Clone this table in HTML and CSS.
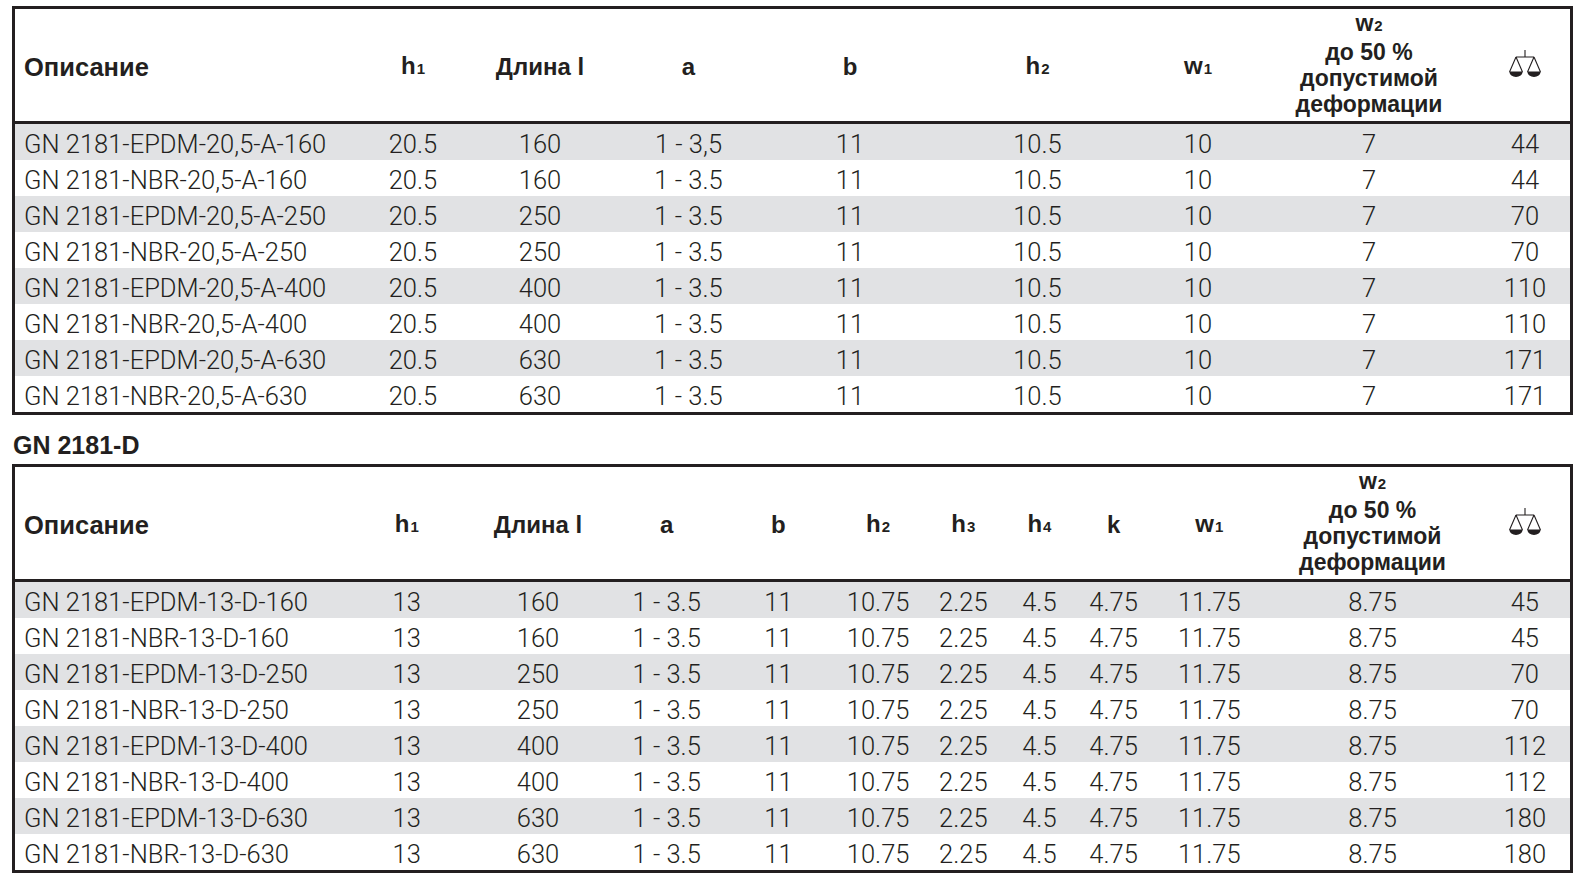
FILE: index.html
```html
<!DOCTYPE html>
<html lang="ru">
<head>
<meta charset="utf-8">
<title>GN 2181</title>
<link rel="stylesheet" href="styles.css">
</head>
<body>
<div class="page">
  <table class="spec">
    <colgroup>
      <col class="c-desc1"><col class="c-h1a"><col class="c-lena"><col class="c-aa"><col class="c-ba"><col class="c-h2a"><col class="c-w1a"><col class="c-w2a"><col class="c-wt">
    </colgroup>
    <thead>
      <tr>
        <th class="desc">Описание</th>
        <th>h<span class="sub">1</span></th>
        <th>Длина l</th>
        <th>a</th>
        <th>b</th>
        <th>h<span class="sub">2</span></th>
        <th>w<span class="sub">1</span></th>
        <th class="multi">w<span class="sub">2</span><br>до 50 %<br>допустимой<br>деформации</th>
        <th class="icon"><svg class="scale" viewBox="0 0 34 28" width="34" height="28" aria-label="вес"><path d="M17 0V7M8 7H26M8 7L1.5 22M8 7L14.5 22M1.5 22H14.5M26 7L19.5 22M26 7L32.5 22M19.5 22H32.5" fill="none" stroke="#231f20" stroke-width="1.1"/><path d="M1.5 22A6.5 5 0 0 0 14.5 22Z M19.5 22A6.5 5 0 0 0 32.5 22Z" fill="#231f20"/></svg></th>
      </tr>
    </thead>
    <tbody>
      <tr class="alt"><td class="desc">GN 2181-EPDM-20,5-A-160</td><td>20.5</td><td>160</td><td>1 - 3,5</td><td>11</td><td>10.5</td><td>10</td><td>7</td><td>44</td></tr>
      <tr><td class="desc">GN 2181-NBR-20,5-A-160</td><td>20.5</td><td>160</td><td>1 - 3.5</td><td>11</td><td>10.5</td><td>10</td><td>7</td><td>44</td></tr>
      <tr class="alt"><td class="desc">GN 2181-EPDM-20,5-A-250</td><td>20.5</td><td>250</td><td>1 - 3.5</td><td>11</td><td>10.5</td><td>10</td><td>7</td><td>70</td></tr>
      <tr><td class="desc">GN 2181-NBR-20,5-A-250</td><td>20.5</td><td>250</td><td>1 - 3.5</td><td>11</td><td>10.5</td><td>10</td><td>7</td><td>70</td></tr>
      <tr class="alt"><td class="desc">GN 2181-EPDM-20,5-A-400</td><td>20.5</td><td>400</td><td>1 - 3.5</td><td>11</td><td>10.5</td><td>10</td><td>7</td><td>110</td></tr>
      <tr><td class="desc">GN 2181-NBR-20,5-A-400</td><td>20.5</td><td>400</td><td>1 - 3.5</td><td>11</td><td>10.5</td><td>10</td><td>7</td><td>110</td></tr>
      <tr class="alt"><td class="desc">GN 2181-EPDM-20,5-A-630</td><td>20.5</td><td>630</td><td>1 - 3.5</td><td>11</td><td>10.5</td><td>10</td><td>7</td><td>171</td></tr>
      <tr><td class="desc">GN 2181-NBR-20,5-A-630</td><td>20.5</td><td>630</td><td>1 - 3.5</td><td>11</td><td>10.5</td><td>10</td><td>7</td><td>171</td></tr>
    </tbody>
  </table>

  <div class="label">GN 2181-D</div>

  <table class="spec">
    <colgroup>
      <col class="c-desc2"><col class="c-h1b"><col class="c-lenb"><col class="c-ab"><col class="c-bb"><col class="c-h2b"><col class="c-h3b"><col class="c-h4b"><col class="c-kb"><col class="c-w1b"><col class="c-w2b"><col class="c-wt">
    </colgroup>
    <thead>
      <tr>
        <th class="desc">Описание</th>
        <th>h<span class="sub">1</span></th>
        <th>Длина l</th>
        <th>a</th>
        <th>b</th>
        <th>h<span class="sub">2</span></th>
        <th>h<span class="sub">3</span></th>
        <th>h<span class="sub">4</span></th>
        <th>k</th>
        <th>w<span class="sub">1</span></th>
        <th class="multi">w<span class="sub">2</span><br>до 50 %<br>допустимой<br>деформации</th>
        <th class="icon"><svg class="scale" viewBox="0 0 34 28" width="34" height="28" aria-label="вес"><path d="M17 0V7M8 7H26M8 7L1.5 22M8 7L14.5 22M1.5 22H14.5M26 7L19.5 22M26 7L32.5 22M19.5 22H32.5" fill="none" stroke="#231f20" stroke-width="1.1"/><path d="M1.5 22A6.5 5 0 0 0 14.5 22Z M19.5 22A6.5 5 0 0 0 32.5 22Z" fill="#231f20"/></svg></th>
      </tr>
    </thead>
    <tbody>
      <tr class="alt"><td class="desc">GN 2181-EPDM-13-D-160</td><td>13</td><td>160</td><td>1 - 3.5</td><td>11</td><td>10.75</td><td>2.25</td><td>4.5</td><td>4.75</td><td>11.75</td><td>8.75</td><td>45</td></tr>
      <tr><td class="desc">GN 2181-NBR-13-D-160</td><td>13</td><td>160</td><td>1 - 3.5</td><td>11</td><td>10.75</td><td>2.25</td><td>4.5</td><td>4.75</td><td>11.75</td><td>8.75</td><td>45</td></tr>
      <tr class="alt"><td class="desc">GN 2181-EPDM-13-D-250</td><td>13</td><td>250</td><td>1 - 3.5</td><td>11</td><td>10.75</td><td>2.25</td><td>4.5</td><td>4.75</td><td>11.75</td><td>8.75</td><td>70</td></tr>
      <tr><td class="desc">GN 2181-NBR-13-D-250</td><td>13</td><td>250</td><td>1 - 3.5</td><td>11</td><td>10.75</td><td>2.25</td><td>4.5</td><td>4.75</td><td>11.75</td><td>8.75</td><td>70</td></tr>
      <tr class="alt"><td class="desc">GN 2181-EPDM-13-D-400</td><td>13</td><td>400</td><td>1 - 3.5</td><td>11</td><td>10.75</td><td>2.25</td><td>4.5</td><td>4.75</td><td>11.75</td><td>8.75</td><td>112</td></tr>
      <tr><td class="desc">GN 2181-NBR-13-D-400</td><td>13</td><td>400</td><td>1 - 3.5</td><td>11</td><td>10.75</td><td>2.25</td><td>4.5</td><td>4.75</td><td>11.75</td><td>8.75</td><td>112</td></tr>
      <tr class="alt"><td class="desc">GN 2181-EPDM-13-D-630</td><td>13</td><td>630</td><td>1 - 3.5</td><td>11</td><td>10.75</td><td>2.25</td><td>4.5</td><td>4.75</td><td>11.75</td><td>8.75</td><td>180</td></tr>
      <tr><td class="desc">GN 2181-NBR-13-D-630</td><td>13</td><td>630</td><td>1 - 3.5</td><td>11</td><td>10.75</td><td>2.25</td><td>4.5</td><td>4.75</td><td>11.75</td><td>8.75</td><td>180</td></tr>
    </tbody>
  </table>
</div>
</body>
</html>
```

FILE: styles.css
```css
html, body {
  margin: 0;
  padding: 0;
  background: #ffffff;
}

.page {
  padding: 6px 13px 0 12px;
  color: #231f20;
}

.spec {
  width: 1561px;
  table-layout: fixed;
  border-collapse: separate;
  border-spacing: 0;
  border: 3px solid #231f20;
}

.spec th {
  height: 108px;
  padding: 4px 0 0;
  border-bottom: 3px solid #231f20;
  font-family: "Liberation Sans", Arial, sans-serif;
  font-weight: 700;
  font-size: 24px;
  line-height: 26px;
  text-align: center;
  vertical-align: middle;
  white-space: nowrap;
}

.spec th.desc {
  font-size: 25.5px;
}

.spec th.multi {
  font-size: 23px;
  line-height: 26px;
  padding-top: 0;
  padding-bottom: 3px;
}

.spec th.icon {
  padding-top: 1px;
  padding-bottom: 3px;
}

.spec th .sub {
  font-size: 15px;
  margin-left: 1px;
}

.spec th.desc,
.spec td.desc {
  text-align: left;
  padding-left: 9px;
}

.spec td {
  height: 32px;
  padding: 4px 0 0;
  font-family: Roboto, "Liberation Sans", sans-serif;
  font-weight: 300;
  font-size: 25.5px;
  line-height: 32px;
  text-align: center;
  vertical-align: middle;
  white-space: nowrap;
}

.spec tr.alt td {
  background: #e1e2e4;
}

.scale {
  display: block;
  margin: 0 auto;
}

.label {
  padding: 18px 0 7px 1px;
  font-family: "Liberation Sans", Arial, sans-serif;
  font-weight: 700;
  font-size: 25px;
  line-height: 24px;
}

/* table 1 columns */
.c-desc1 { width: 345px; }
.c-h1a { width: 106px; }
.c-lena { width: 148px; }
.c-aa { width: 149px; }
.c-ba { width: 174px; }
.c-h2a { width: 201px; }
.c-w1a { width: 120px; }
.c-w2a { width: 222px; }
.c-wt { width: 90px; }

/* table 2 columns */
.c-desc2 { width: 333px; }
.c-h1b { width: 116px; }
.c-lenb { width: 146px; }
.c-ab { width: 111px; }
.c-bb { width: 112px; }
.c-h2b { width: 87px; }
.c-h3b { width: 83px; }
.c-h4b { width: 69px; }
.c-kb { width: 79px; }
.c-w1b { width: 112px; }
.c-w2b { width: 214px; }
```
